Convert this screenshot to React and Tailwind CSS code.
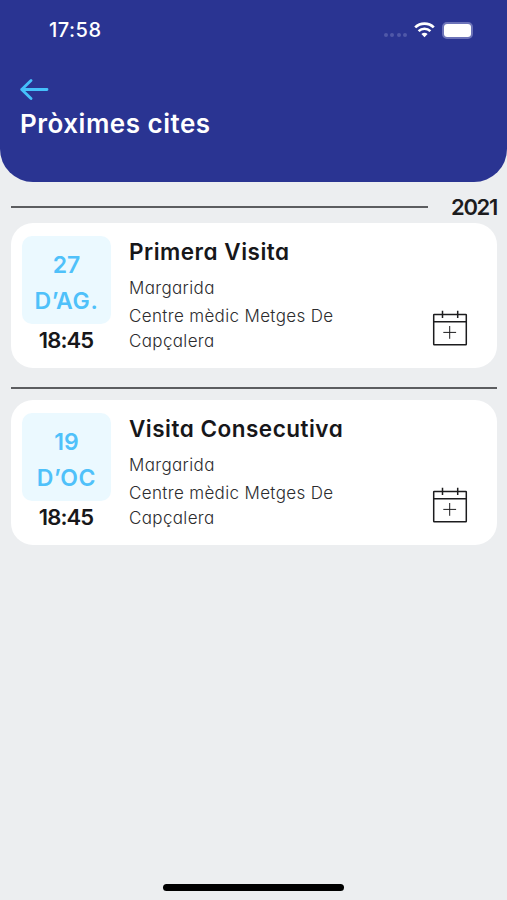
import React from "react";

const appointments = [
  {
    id: 1,
    year: "2021",
    day: "27",
    month: "D’AG.",
    time: "18:45",
    title: "Primera Visita",
    patient: "Margarida",
    center: "Centre mèdic Metges De Capçalera",
  },
  {
    id: 2,
    day: "19",
    month: "D’OC",
    time: "18:45",
    title: "Visita Consecutiva",
    patient: "Margarida",
    center: "Centre mèdic Metges De Capçalera",
  },
];

function StatusBar() {
  return (
    <div className="flex h-[60px] items-center justify-between pl-[49px] pr-[34px]">
      <span className="text-[20px] font-medium leading-none tracking-[0.5px]">17:58</span>
      <div className="flex items-center">
        <div className="mt-[9px] flex gap-[2.5px]">
          <span className="h-1 w-1 rounded-full bg-[#5058a8]" />
          <span className="h-1 w-1 rounded-full bg-[#5058a8]" />
          <span className="h-1 w-1 rounded-full bg-[#5058a8]" />
          <span className="h-1 w-1 rounded-full bg-[#5058a8]" />
        </div>
        <svg className="ml-[7px] h-[16px] w-[21px]" viewBox="0 0 21 16" fill="none" stroke="#fff">
          <path d="M1.2 5.4C6.4.3 14.6.3 19.8 5.4" strokeWidth="2.7" />
          <path d="M4.6 9.1C7.9 6 13.1 6 16.4 9.1" strokeWidth="2.6" />
          <path d="M7.4 11.9C9.2 10.2 11.8 10.2 13.6 11.9L10.5 15.2Z" fill="#fff" stroke="none" />
        </svg>
        <div className="ml-[7px] h-[17px] w-[31px] rounded-[5px] border-2 border-[#6c73b8]">
          <div className="h-full w-full rounded-[3px] bg-white" />
        </div>
      </div>
    </div>
  );
}

function CalendarPlus() {
  return (
    <svg className="h-[36px] w-[36px]" viewBox="0 0 36 36" fill="none" stroke="#1c1c1e" strokeWidth="1.5">
      <rect x="1.7" y="4.4" width="32.6" height="30.4" rx="0.5" />
      <path d="M1.7 11.7H34.3M10.5 0.8V8M25.7 0.8V8" />
      <path d="M17.7 16V28.8M11.3 22.4H24.1" strokeWidth="1" />
    </svg>
  );
}

function AppointmentCard({ appointment }) {
  return (
    <div className="flex h-[145px] rounded-[22px] bg-white pl-[11px] pt-[13px]">
      <div className="w-[89px] shrink-0 text-center font-semibold">
        <div className="h-[88px] rounded-[10px] bg-[#ebf9ff] pt-[11px] text-[23px] leading-[36px] text-[#4fc1fa]">
          <div>{appointment.day}</div>
          <div className="tracking-[0.7px]">{appointment.month}</div>
        </div>
        <div className="pr-px text-[22px] leading-[33px] tracking-[-0.9px] text-[#17171a]">{appointment.time}</div>
      </div>
      <div className="ml-[18px] w-[240px] text-[#2c2c2e]">
        <h2 className="text-[22.5px] font-semibold leading-[32px] tracking-[0.5px] text-[#17171a]">
          {appointment.title}
        </h2>
        <p className="mt-[7px] text-[17px] font-light leading-[27px] tracking-[0.35px]">{appointment.patient}</p>
        <p className="mt-[2px] text-[17px] font-light leading-[25px] tracking-[0.35px]">{appointment.center}</p>
      </div>
      <button className="ml-auto mr-[29px] mt-[74px] h-[36px]">
        <CalendarPlus />
      </button>
    </div>
  );
}

export default function App() {
  return (
    <div className="flex h-[900px] w-[507px] flex-col bg-[#eceef0] font-['Inter',sans-serif] [font-feature-settings:'cv11']">
      <header className="h-[182px] shrink-0 rounded-b-[33px] bg-[#2a3492] text-white">
        <StatusBar />
        <button className="ml-5 mt-[18px] block">
          <svg className="h-[23px] w-[29px]" viewBox="0 0 29 23" fill="none" stroke="#45c0fb" strokeWidth="2.8" strokeLinecap="round" strokeLinejoin="round">
            <path d="M11 2.5L1.7 11.5L11 20.5M1.7 11.5H27" />
          </svg>
        </button>
        <h1 className="ml-5 mt-[7px] text-[26px] font-semibold leading-[32px] tracking-[0.5px]">Pròximes cites</h1>
      </header>

      <main className="flex-1 pl-[11px] pr-[10px]">
        {appointments.map((appointment) => (
          <section key={appointment.id}>
            {appointment.year ? (
              <div className="flex h-[41px] items-center justify-between pt-[9px]">
                <div className="h-[2px] w-[417px] bg-[#5c5d60]" />
                <span className="text-[22px] font-semibold leading-[32px] tracking-[-1.3px] text-[#1c1c1e]">
                  {appointment.year}
                </span>
              </div>
            ) : (
              <div className="flex h-[32px] items-center pt-[7px]">
                <div className="h-[2px] w-full bg-[#5c5d60]" />
              </div>
            )}
            <AppointmentCard appointment={appointment} />
          </section>
        ))}
      </main>

      <div className="mx-auto mb-[9px] h-[7px] w-[181px] shrink-0 rounded-full bg-black" />
    </div>
  );
}
